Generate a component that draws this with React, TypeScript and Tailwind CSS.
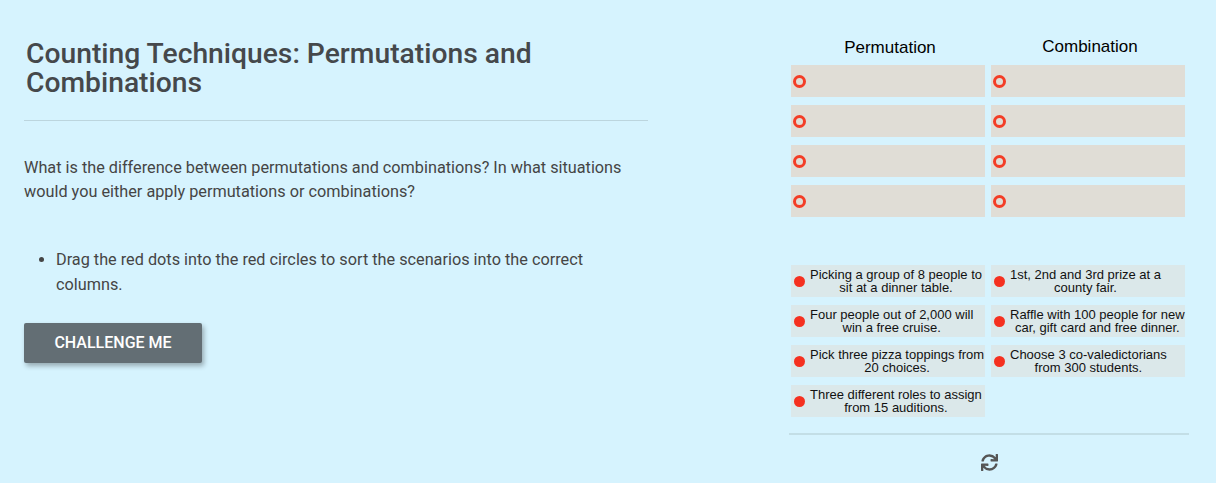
import { FaSync } from "react-icons/fa";

const sources: (string[] | null)[] = [
  ["Picking a group of 8 people to", "sit at a dinner table."],
  ["1st, 2nd and 3rd prize at a", "county fair."],
  ["Four people out of 2,000 will", "win a free cruise."],
  ["Raffle with 100 people for new", "car, gift card and free dinner."],
  ["Pick three pizza toppings from", "20 choices."],
  ["Choose 3 co-valedictorians", "from 300 students."],
  ["Three different roles to assign", "from 15 auditions."],
];

const DropBox = () => (
  <div className="flex h-[32px] items-center bg-[#e0ddd6]">
    <span className="ml-[2px] h-[13px] w-[13px] rounded-full border-[3px] border-[#f33d26]" />
  </div>
);

const SourceItem = ({ lines }: { lines: string[] }) => (
  <div className="flex h-[32px] items-center bg-[#dbe8ea]">
    <span className="ml-[3px] h-[11px] w-[11px] shrink-0 rounded-full bg-[#f5301f]" />
    <p className="ml-[5px] whitespace-nowrap text-center text-[13px] leading-[13px] text-[#111]">
      {lines.map((l) => (
        <span key={l} className="block">
          {l}
        </span>
      ))}
    </p>
  </div>
);

export default function App() {
  return (
    <div
      className="flex min-h-screen bg-[#d6f3fe] pl-[24px]"
      style={{ fontFamily: "Roboto, 'Liberation Sans', sans-serif" }}
    >
      <div className="w-[624px] pt-[39px]">
        <h1 className="pl-[2px] text-[28.25px] font-medium leading-[29px] text-[#45484b]">
          Counting Techniques: Permutations and Combinations
        </h1>
        <div className="mt-[23px] border-t border-[#bcd5de]" />
        <p className="mt-[35px] text-[16.25px] leading-[24px] text-[#454545]">
          What is the difference between permutations and combinations? In what
          situations would you either apply permutations or combinations?
        </p>
        <ul className="mt-[43px] list-disc pl-[32px] text-[16.25px] leading-[25px] text-[#454545]">
          <li>
            Drag the red dots into the red circles to sort the scenarios into
            the correct columns.
          </li>
        </ul>
        <button className="mt-[26px] h-[40px] w-[178px] rounded-[2px] bg-[#636e74] text-[16px] font-medium text-white shadow-[2px_3px_5px_rgba(0,0,0,0.3)]">
          CHALLENGE ME
        </button>
      </div>

      <div
        className="ml-[141px] w-[400px] pt-[38px]"
        style={{ fontFamily: "'Liberation Sans', Arial, sans-serif" }}
      >
        <div className="mb-[7px] grid grid-cols-[194px_194px] gap-x-[6px] pl-[4px] text-center text-[17px] leading-[20px] text-black">
          <div>Permutation</div>
          <div className="-mt-px">Combination</div>
        </div>
        <div className="grid grid-cols-[194px_194px] gap-x-[6px] gap-y-[8px] px-[2px]">
          {Array.from({ length: 8 }).map((_, i) => (
            <DropBox key={i} />
          ))}
        </div>
        <div className="mt-[48px] grid grid-cols-[194px_194px] gap-x-[6px] gap-y-[8px] px-[2px]">
          {sources.map((s, i) => (s ? <SourceItem key={i} lines={s} /> : null))}
        </div>
        <div className="mt-[16px] border-t-2 border-[#c3dee6]" />
        <div className="mt-[19px] flex justify-center">
          <FaSync className="h-[17px] w-[17px] text-[#555]" />
        </div>
      </div>
    </div>
  );
}
